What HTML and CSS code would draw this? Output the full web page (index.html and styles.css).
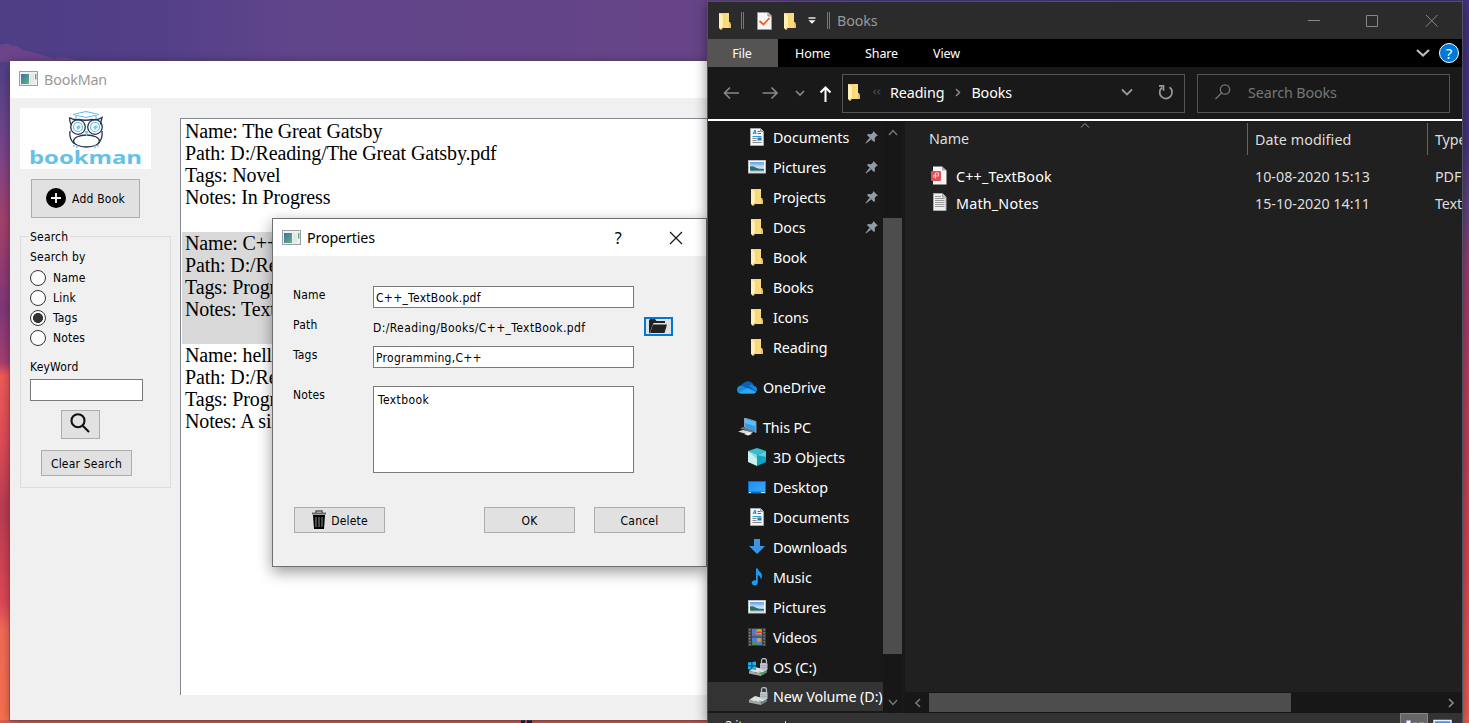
FILE: index.html
```
<!DOCTYPE html>
<html lang="en">
<head>
<meta charset="utf-8">
<title>BookMan</title>
<link rel="stylesheet" href="styles.css">
</head>
<body>
<svg class="defs" width="0" height="0">
  <defs>
    <linearGradient id="gfold" x1="0" x2="1"><stop offset="0" stop-color="#f7d271"/><stop offset="1" stop-color="#fddc83"/></linearGradient>
    <linearGradient id="gsky" x1="0" y1="0" x2="0" y2="1"><stop offset="0" stop-color="#5f9fe8"/><stop offset=".55" stop-color="#c9e6fa"/><stop offset="1" stop-color="#6fa9cf"/></linearGradient>
    <linearGradient id="gapp" x1="0" y1="0" x2="1" y2="1"><stop offset="0" stop-color="#3d6fa8"/><stop offset="1" stop-color="#62b67d"/></linearGradient>
    <linearGradient id="gdesk" x1="0" y1="0" x2="1" y2="1"><stop offset="0" stop-color="#1e90f5"/><stop offset="1" stop-color="#36a9ff"/></linearGradient>
  </defs>
  <symbol id="app" viewBox="0 0 19 15"><rect x=".5" y=".5" width="18" height="14" fill="#eef0f1" stroke="#9ba0a5"/><rect x="2" y="3" width="8" height="10" fill="url(#gapp)"/><rect x="11" y="3" width="4" height="10" fill="#e6e6e6"/><rect x="16" y="3" width="1.4" height="5.500" fill="#55ad8e"/></symbol>
  <symbol id="folder" viewBox="0 0 18 18"><path d="M3 1h10v9l2 3v3H5z" fill="url(#gfold)"/><path d="M13 10h1.200l.8 3v3h-2z" fill="#e8c16b"/><path d="M3 1l4 2.500v12L5 18l-2-2z" fill="#fff0b8"/><path d="M5 18v-1.500L7 15v1z" fill="#d9ad4a"/></symbol>
  <symbol id="doc" viewBox="0 0 18 18"><path d="M2.500.5h10l3 3v14h-13z" fill="#f5f6f7" stroke="#a5a9ac"/><path d="M12.500.5v3h3" fill="#d2d4d5" stroke="#999"/><path d="M5 6l2-4 1 4M6 5h2M9.500 3.500H12M9.500 5.500H13" stroke="#1686c8" fill="none"/><path d="M4.500 8.500h9" stroke="#2d9be0"/><path d="M4.500 10.500h4M4.500 12.500h4M4.500 14.500h9" stroke="#888"/><rect x="9.500" y="9.500" width="4" height="3" fill="#2f79a4"/></symbol>
  <symbol id="pic" viewBox="0 0 18 18"><rect x=".5" y="2.500" width="17" height="12.500" fill="#fff" stroke="#bbb"/><rect x="2" y="4" width="14" height="9.500" fill="url(#gsky)"/><path d="M2 8.500q3-1 5.500 1 4 2 8.500 1.500v1.500H2z" fill="#356d63"/></symbol>
  <symbol id="pin" viewBox="0 0 14 14"><g fill="#929ca5"><path d="M8.300 1l4.700 4.700-1.500.3-1.800 2 .3 3-1 1L2 5l1-1 3 .3 2-1.800z"/><path d="M4.500 7.800l1.700 1.700L1 13.500.5 13z"/></g></symbol>
  <symbol id="cloud" viewBox="0 0 20 18"><path d="M4 9a4 4 0 0 1 3-4 6 6 0 0 1 10 3.500A3.500 3.500 0 0 1 19 14H4a3 3 0 0 1 0-6z" fill="#0b61b5"/><path d="M12 7.500A4 4 0 0 1 17 8a3.200 3.200 0 0 1 2 5.500z" fill="#1488d8"/><path d="M0 12a4 4 0 0 1 6-3.800l4 2 9 3.800q-1 1.500-3 1.500H4a4 4 0 0 1-4-3.500z" fill="#1490df"/><path d="M2 14.800l9-4.800 8 4q-1 1.500-3 1.500H4z" fill="#2fa8ee"/></symbol>
  <symbol id="pc" viewBox="0 0 20 18"><path d="M7.500 0L19 3.500v11L7.500 9z" fill="#2b9ff0" stroke="#a0b4c4" stroke-width=".8"/><path d="M8 1l10 3v4L8 5z" fill="#64bcf7"/><path d="M6 9l12 4-3 1.500L3 10.500z" fill="#69767f"/><path d="M1 13.500L6 12l10 2.500-5 2z" fill="#d8dde4"/><path d="M7 16l5-1.500 3 1.500-4 1.500z" fill="#f0f0f0"/></symbol>
  <symbol id="cube" viewBox="0 0 18 18"><path d="M9 0l9 3-9 4-9-4z" fill="#38bdd0"/><path d="M0 3l9 4v11l-9-4z" fill="#c9f0ef"/><path d="M18 3L9 7v11l9-4z" fill="#14a1c6"/><path d="M9 7l9-4v6z" fill="#55d1df"/><path d="M0 3l9 4v4z" fill="#7edcdf"/></symbol>
  <symbol id="desk" viewBox="0 0 18 18"><rect y="3" width="18" height="12.500" fill="#0b6bbb"/><rect x="1" y="4" width="16" height="9.500" fill="url(#gdesk)"/><path d="M1 14.500h2M13 14.500h4" stroke="#cfeaff"/></symbol>
  <symbol id="down" viewBox="0 0 18 18"><path d="M6 1h6v7h5l-8 8-8-8h5z" fill="#3b95e6"/></symbol>
  <symbol id="music" viewBox="0 0 18 18"><path d="M8 .5h1.800c.3 3 3.700 3.500 4.200 7 .2 2-.7 3.300-1.500 4 .5-2.500-.8-4-2.700-4.500v7c0 5-6.800 4-6 .5.500-2 2.700-2.500 4.200-2z" fill="#1a9cf5"/></symbol>
  <symbol id="video" viewBox="0 0 18 18"><path d="M0 0h18v18H0z" fill="#3d3d3f"/><path d="M4 1h10v7.500H4zM4 9.500h10V17H4z" fill="#4b80d4"/><circle cx="11" cy="4" r="2.800" fill="#e9a62d"/><path d="M8.500 3.500h5V5h-5z" fill="#d33"/><path d="M5 5l3 3H4z" fill="#e33c34"/><circle cx="11" cy="12" r="2.200" fill="#d0a027"/><path d="M4 14l3 1 3 2H4zM10 5.500l3 2h-3z" fill="#5d8b2e"/><path d="M1.800 1v17M16.200 1v17" stroke="#888" stroke-width="1.400" stroke-dasharray="1.500 1.500"/></symbol>
  <symbol id="disk" viewBox="0 0 20 18"><path d="M1 13l6-4 12 3-6 3.500z" fill="#dedfe0"/><path d="M1 13l12 2.500V18L1 15.500z" fill="#a5a8ab"/><path d="M13 15.500l6-3.500v2.500L13 18z" fill="#777c80"/><path d="M11 14l4 .8" stroke="#35d04a"/><path d="M13.500 6V3q0-2.500 2.500-2.500T18.500 3v4" fill="none" stroke="#b7bcc0" stroke-width="1.300"/><path d="M12 5.500l4-.8 3.500 1v6l-3.500 1-4-1.500z" fill="#c1c8cd"/><path d="M12.500 7.500l3.500.5 3-.6M12.500 9.500l3.500.5 3-.6" stroke="#929a9f" fill="none" stroke-width=".7"/></symbol>
</svg>

<svg class="wallpaper" viewBox="0 0 1469 723" preserveAspectRatio="none">
  <defs>
    <linearGradient id="top" x1="0" x2="1"><stop offset="0" stop-color="#4e3e86"/><stop offset=".1" stop-color="#523f88"/><stop offset=".2" stop-color="#60458b"/><stop offset=".48" stop-color="#674487"/><stop offset=".6" stop-color="#4a3a83"/><stop offset="1" stop-color="#44337f"/></linearGradient>
    <linearGradient id="side" x1="0" y1="0" x2="0" y2="1"><stop offset="0" stop-color="#4c3f87"/><stop offset=".065" stop-color="#614389"/><stop offset=".14" stop-color="#79458b"/><stop offset=".25" stop-color="#a5426e"/><stop offset=".38" stop-color="#80387a"/><stop offset=".46" stop-color="#a64074"/><stop offset=".48" stop-color="#f05b59"/><stop offset=".58" stop-color="#df4c58"/><stop offset=".68" stop-color="#ba3d51"/><stop offset=".82" stop-color="#e04858"/><stop offset=".86" stop-color="#f26c58"/><stop offset="1" stop-color="#fa7050"/></linearGradient>
    <linearGradient id="right" x1="0" y1="0" x2="0" y2="1"><stop offset="0" stop-color="#46337f"/><stop offset=".2" stop-color="#49367d"/><stop offset=".3" stop-color="#67477f"/><stop offset=".38" stop-color="#9c3f6e"/><stop offset=".5" stop-color="#b83d60"/><stop offset=".75" stop-color="#d64752"/><stop offset="1" stop-color="#ed6354"/></linearGradient>
  </defs>
  <rect width="1469" height="62" fill="url(#top)"/>
  <rect y="55" width="12" height="668" fill="url(#side)"/>
  <path d="M0 45q7-3 12 1 6-1 10 4 12 2 20 5l12 4q12-4 24 3H0z" fill="#6b4489"/>
  <rect x="1460" width="9" height="723" fill="url(#right)"/>
  <rect y="720" width="1469" height="3" fill="#d9604f"/>
  <path d="M521 720h4v3h-4zM527 720h5v3h-5z" fill="#202040"/>
</svg>

<section class="bookman">
  <header class="bm-title"><svg class="app"><use href="#app"/></svg><span class="t-main">BookMan</span></header>
  <div class="bm-body">
    <aside class="side">
      <svg class="logo" viewBox="0 0 131 61">
        <g fill="none" stroke="#283347" stroke-width="1.300">
          <path d="M49.500 9.500q4 3 9 2 7 1.500 14 0 5 1 9.500-2-1 4-1.500 7M49.500 9.500q0 4 1.500 7M50 23Q49 31 54 35.500M82 23Q83 31 78 35.500"/>
          <circle cx="58" cy="19" r="7.300"/><circle cx="75" cy="19" r="7.300"/><ellipse cx="66.500" cy="33" rx="13" ry="6"/>
        </g>
        <g fill="none" stroke="#62bce8" stroke-width="1.200"><path d="M53 6.500l13-3 13 3-13 3zM56 8v3M76 8v3"/><circle cx="58" cy="19" r="4.500"/><circle cx="75" cy="19" r="4.500"/><path d="M54 39v-2M57 40v-3M75 40v-3M78 39v-2M66.500 25v3"/></g>
        <path d="M56 19l3-2 2 2-3 3zM73 19l3-2 2 2-3 3zM64 23h5l-2.500 4z" fill="#7acbed"/>
        <text x="9" y="55.500" textLength="113" lengthAdjust="spacingAndGlyphs" class="logo-text">bookman</text>
      </svg>
      <button class="btn add"><svg viewBox="0 0 20 20" width="20" height="20"><circle cx="10" cy="10" r="10"/><path d="M5 10h10M10 5v10" stroke="#fff" stroke-width="1.800"/></svg><span>Add Book</span></button>
      <fieldset class="group">
        <legend>Search</legend>
        <p class="by">Search by</p>
        <label class="radio"><i></i>Name</label>
        <label class="radio"><i></i>Link</label>
        <label class="radio on"><i></i>Tags</label>
        <label class="radio"><i></i>Notes</label>
        <p class="kw">KeyWord</p>
        <div class="kwbox"></div>
        <button class="btn find"><svg viewBox="0 0 20 20" width="20" height="20" fill="none" stroke="#111" stroke-width="2.100"><circle cx="8" cy="7.700" r="6.500"/><path d="M12.500 12.500L19 19"/></svg></button>
        <button class="btn clear">Clear Search</button>
      </fieldset>
    </aside>
    <main class="list">
      <article class="item"><p>Name: The Great Gatsby</p><p>Path: D:/Reading/The Great Gatsby.pdf</p><p>Tags: Novel</p><p>Notes: In Progress</p></article>
      <article class="item sel"><p>Name: C++</p><p>Path: D:/Re</p><p>Tags: Progr</p><p>Notes: Text</p></article>
      <article class="item"><p>Name: hello</p><p>Path: D:/Re</p><p>Tags: Progr</p><p>Notes: A si</p></article>
    </main>
  </div>
</section>

<section class="dialog">
  <header class="dg-title"><svg class="app"><use href="#app"/></svg><span class="t-main">Properties</span><span class="q">?</span><svg class="x" width="14" height="14" viewBox="0 0 14 14"><path d="M1 1l12 12M13 1L1 13" stroke="#111" stroke-width="1.100"/></svg></header>
  <div class="form">
    <label class="l1">Name</label><div class="field"><span class="w-name">C++_TextBook.pdf</span></div><i></i>
    <label class="l2">Path</label><div class="path">D:/Reading/Books/C++_TextBook.pdf</div>
    <button class="browse"><svg width="20" height="15" viewBox="0 0 20 15"><path d="M1 15V1.500L2 0h5l1.500 2H17v2H5.500L2 13z" fill="#222"/><path d="M5 5.500h14L16.500 14H2z" fill="#222"/></svg></button>
    <label class="l3">Tags</label><div class="field"><span>Programming,C++</span></div><i></i>
    <label class="l4">Notes</label><div class="area">Textbook</div><i></i>
  </div>
  <footer class="actions">
    <button class="btn del"><svg width="16" height="20" viewBox="0 0 16 20"><path d="M5 3V1h6v2" fill="none" stroke="#555" stroke-width="1.400"/><path d="M1 2.500h14v2H1z" fill="#666"/><path d="M2 5h12l-1 14H3z"/><path d="M5 7v10M8 7v10M11 7v10" stroke="#888" stroke-width="1.100"/></svg><span>Delete</span></button>
    <button class="btn">OK</button>
    <button class="btn cancel">Cancel</button>
  </footer>
</section>

<section class="explorer">
  <header class="ex-title">
    <svg class="f18"><use href="#folder"/></svg><b class="sep"></b>
    <svg class="check" width="15" height="18" viewBox="0 0 15 18"><path d="M.5.5h10.500l3.500 3.500v13.500H.5z" fill="#f5f6f8" stroke="#999"/><path d="M11 .5V4h3.500" fill="#ccc" stroke="#888"/><path d="M2.500 9l4 3.500L12.500 6" fill="none" stroke="#ee5a1c" stroke-width="1.700"/></svg>
    <svg class="f18 second"><use href="#folder"/></svg>
    <svg class="drop" width="8" height="7" viewBox="0 0 8 7"><path d="M.5 1h7" stroke="#fff" stroke-width="1.300"/><path d="M.5 3.200h7L4 6.700z" fill="#fff"/></svg><b class="sep"></b>
    <span class="ex-name">Books</span>
    <svg class="winbtns" width="130" height="14" viewBox="0 0 130 14" fill="none" stroke="#888"><path d="M0 6.500h12M58.500 1.500h11v11h-11zM118 1l11.500 11.500M129.500 1L118 12.500"/></svg>
  </header>
  <nav class="tabs"><span class="file">File</span><span class="home">Home</span><span class="share">Share</span><span class="view">View</span>
    <svg width="14" height="10" viewBox="0 0 14 10"><path d="M1 2l6 5.500L13 2" fill="none" stroke="#bbb" stroke-width="2.200"/></svg><em class="help">?</em></nav>
  <div class="addr">
    <svg class="arrows" width="110" height="20" viewBox="0 0 110 20" fill="none" stroke="#888" stroke-width="1.700"><path d="M16 10H1.500M7 4.500L1.500 10 7 15.500M39.500 10H54M48.500 4.500L54 10l-5.500 5.500"/><path d="M73 8l4 4 4-4"/><path d="M102.500 19V4.500M97.500 9.500l5-5 5 5" stroke="#fff" stroke-width="2"/></svg>
    <div class="crumbs"><svg class="f18"><use href="#folder"/></svg><svg class="dbl" width="9" height="6" viewBox="0 0 9 6" fill="none" stroke="#666"><path d="M4 .5L1.500 3 4 5.500M8 .5L5.500 3 8 5.500"/></svg><span class="c1">Reading</span><svg class="cr" width="6" height="9" viewBox="0 0 6 9" fill="none" stroke="#888" stroke-width="1.500"><path d="M1 1l3.500 3.500L1 8"/></svg><span>Books</span>
      <svg class="cdown" width="12" height="8" viewBox="0 0 12 8" fill="none" stroke="#999" stroke-width="1.800"><path d="M1 1.500l5 5 5-5"/></svg><svg class="refresh" width="16" height="16" viewBox="0 0 16 16" fill="none" stroke="#999" stroke-width="1.700"><path d="M4 3.500a6.200 6.200 0 1 0 7.500-.2M1 1.800h4.500v5"/></svg></div>
    <div class="search"><svg width="16" height="16" viewBox="0 0 16 16" fill="none" stroke="#777" stroke-width="1.200"><circle cx="10" cy="5.500" r="4.700"/><path d="M6.500 9L.5 15"/></svg><span>Search Books</span></div>
  </div>
  <div class="ex-body">
    <div class="tree">
      <div class="row"><svg><use href="#doc"/></svg><span>Documents</span><svg class="pin"><use href="#pin"/></svg></div>
      <div class="row"><svg><use href="#pic"/></svg><span>Pictures</span><svg class="pin"><use href="#pin"/></svg></div>
      <div class="row"><svg><use href="#folder"/></svg><span>Projects</span><svg class="pin"><use href="#pin"/></svg></div>
      <div class="row"><svg><use href="#folder"/></svg><span>Docs</span><svg class="pin"><use href="#pin"/></svg></div>
      <div class="row"><svg><use href="#folder"/></svg><span>Book</span></div>
      <div class="row"><svg><use href="#folder"/></svg><span>Books</span></div>
      <div class="row"><svg><use href="#folder"/></svg><span>Icons</span></div>
      <div class="row"><svg><use href="#folder"/></svg><span>Reading</span></div>
      <div class="row root"><svg><use href="#cloud"/></svg><span>OneDrive</span></div>
      <div class="row root"><svg><use href="#pc"/></svg><span>This PC</span></div>
      <div class="row"><svg><use href="#cube"/></svg><span>3D Objects</span></div>
      <div class="row"><svg><use href="#desk"/></svg><span>Desktop</span></div>
      <div class="row"><svg><use href="#doc"/></svg><span>Documents</span></div>
      <div class="row"><svg><use href="#down"/></svg><span>Downloads</span></div>
      <div class="row"><svg><use href="#music"/></svg><span>Music</span></div>
      <div class="row"><svg><use href="#pic"/></svg><span>Pictures</span></div>
      <div class="row"><svg><use href="#video"/></svg><span>Videos</span></div>
      <div class="row drive"><svg viewBox="0 0 20 18"><use href="#disk"/><path d="M0 4.500l3.500-.5v3.500H0zM4.300 4L8 3.500v4H4.300zM0 8.300h3.500v3.500L0 11.300zM4.300 8.300H8V12l-3.700-.4z" fill="#16b4f0"/></svg><span>OS (C:)</span></div>
      <div class="row drive cur"><svg><use href="#disk"/></svg><span>New Volume (D:)</span></div>
    </div>
    <div class="vscroll"><svg width="10" height="7" viewBox="0 0 10 7" fill="none" stroke="#777" stroke-width="1.400"><path d="M1 6l4-4.500L9 6"/></svg><i></i><svg width="10" height="7" viewBox="0 0 10 7" fill="none" stroke="#777" stroke-width="1.400"><path d="M1 1l4 4.500L9 1"/></svg></div>
    <div class="files">
      <div class="cols"><span class="cn">Name</span><span class="cd">Date modified</span><span class="ct">Type</span>
        <svg class="sort" width="10" height="6" viewBox="0 0 10 6"><path d="M1 5.500l4-4 4 4" fill="none" stroke="#999"/></svg></div>
      <div class="frow"><svg width="16" height="19" viewBox="0 0 16 19"><path d="M2 .5h9l4.500 4V18.500H2z" fill="#f6f6f6"/><path d="M11 .5l4.500 4H11z" fill="#aaa"/><rect y="5" width="10" height="10" rx="1" fill="#df5354"/><path d="M3 11.500V9h1.500v3.500M4.500 9V7h3v3H5" fill="none" stroke="#ffc9c9"/></svg><span class="cn">C++_TextBook</span><span class="cd">10-08-2020 15:13</span><span class="ct">PDF</span></div>
      <div class="frow"><svg width="16" height="19" viewBox="0 0 16 19"><path d="M2.500.5h9l3.500 3.500v13.500H2.500z" fill="#eee" stroke="#aaa"/><path d="M11.500.5V4H15" fill="#ccc" stroke="#999"/><path d="M4 3.500h6M4 5.500h9.500M4 7.500h9.500M4 9.500h9.500M4 11.500h9.500M4 13.500h9.500" stroke="#999"/></svg><span class="cn">Math_Notes</span><span class="cd">15-10-2020 14:11</span><span class="ct">Text</span></div>
      <div class="hscroll"><svg width="7" height="10" viewBox="0 0 7 10" fill="none" stroke="#777" stroke-width="1.700"><path d="M6 1L2 5l4 4"/></svg><i></i><svg width="7" height="10" viewBox="0 0 7 10" fill="none" stroke="#888" stroke-width="1.700"><path d="M1 1l4 4-4 4"/></svg></div>
    </div>
  </div>
  <footer class="status"><span class="count">2 items</span><svg width="54" height="10" viewBox="0 0 54 10"><path d="M.5 10V.5h27V10" fill="#666" stroke="#888"/><path d="M6.500 10V7.500h4V10" fill="#fff" stroke="#9ac"/><path d="M13 9.500h4M19 9.500h5" stroke="#888"/><path d="M34 10V7.500h17V10" fill="#4b8fe8" stroke="#eef" stroke-width="1.500"/></svg></footer>
</section>
</body>
</html>
```
FILE: styles.css
```
* { box-sizing: border-box; }
body { margin: 0; width: 1469px; height: 723px; overflow: hidden; position: relative; background: #50408a; font-family: "Noto Sans", sans-serif; }
p { margin: 0; }
button { font: inherit; color: inherit; padding: 0; border-radius: 0; letter-spacing: inherit; }
svg { flex: none; display: block; }
.defs { position: absolute; }
.wallpaper { position: absolute; left: 0; top: 0; width: 1469px; height: 723px; }
.app { width: 19px; height: 15px; }
.t-main { font-size: 14.3px; letter-spacing: -.15px; }

/* Library window */
.bookman { position: absolute; left: 10px; top: 61px; width: 698px; height: 659px; background: #f0f0f0; box-shadow: 0 0 0 1px rgba(90,70,90,.5), 0 2px 10px rgba(0,0,0,.4); font: 12px "DejaVu Sans Condensed", "DejaVu Sans", sans-serif; font-stretch: condensed; letter-spacing: .2px; color: #000; }
.bm-title { height: 37px; background: #fff; display: flex; align-items: center; gap: 6px; padding: 0 0 2px 9px; color: #999; }
.bm-title .t-main { padding-top: 1px; }
.bm-title .t-main, .dg-title .t-main { font-family: "Noto Sans", sans-serif; font-stretch: normal; }
.bm-body { display: flex; height: 622px; }
.side { width: 170px; padding: 10px 0 0 10px; }
.logo { width: 131px; height: 61px; background: #fff; }
.logo-text { font: bold 17px "Open Sans", sans-serif; fill: #67c0e8; letter-spacing: 0; }
.btn { display: flex; align-items: center; justify-content: center; background: #e1e1e1; border: 1px solid #adadad; padding-top: 1px; }
.add { width: 109px; height: 39px; margin: 10px 0 0 11px; gap: 6px; }
.add svg { margin-top: -3px; }
.group { position: relative; width: 151px; height: 252px; margin: 18px 0 0; padding: 0; border: 1px solid #dcdcdc; }
.group legend { position: absolute; left: 7px; top: -9px; padding: 0 2px; background: #f0f0f0; line-height: 18px; }
.by { margin: 11px 0 2px 9px; line-height: 18px; }
.radio { display: flex; align-items: center; height: 20px; margin-left: 9px; gap: 7px; }
.radio i { width: 16px; height: 16px; border: 1px solid #333; border-radius: 50%; background: #fff; }
.radio.on i { background: radial-gradient(circle, #333 0 4.700px, #fff 5.300px); }
.kw { margin: 10px 0 3px 9px; line-height: 18px; }
.kwbox { width: 113px; height: 22px; margin-left: 9px; background: #fff; border: 1px solid #7a7a7a; }
.find { width: 39px; height: 29px; margin: 9px 0 0 40px; padding: 0 1px 3px 0; }
.clear { width: 91px; height: 26px; margin: 11px 0 0 20px; }
.list { flex: 1; height: 577px; margin-top: 20px; border: 1px solid #828790; border-bottom: 0; border-right: 0; padding: 1px 0 0 1px; background: #fff; font: 20px/22px "Liberation Serif", serif; letter-spacing: -.13px; }
.item { height: 112px; padding: 0 3px; white-space: nowrap; }
.item.sel { background: #d9d9d9; }

/* Properties dialog */
.dialog { position: absolute; left: 272px; top: 218px; width: 435px; height: 349px; background: #f0f0f0; border: 1px solid #707070; box-shadow: 0 5px 14px rgba(0,0,0,.4); font: 12px "DejaVu Sans Condensed", "DejaVu Sans", sans-serif; font-stretch: condensed; letter-spacing: .2px; }
.dg-title { height: 37px; background: #fff; display: flex; align-items: center; padding: 0 23px 0 9px; }
.dg-title .t-main { margin-left: 6px; }
.q { margin-left: auto; margin-right: 47px; font: 16px "Noto Sans", sans-serif; }
.form { display: grid; grid-template-columns: 80px 261px 1fr; grid-template-rows: 22px 38px 22px 87px; padding: 30px 0 0 20px; }
.form label { line-height: 18px; }
.form > :nth-last-child(-n+3) { margin-top: 18px; }
.form > .l4 { margin-top: 18px; }
.field { height: 22px; border: 1px solid #7a7a7a; background: #fff; padding: 1px 2px 0; line-height: 20px; letter-spacing: .27px; }
.path { line-height: 40px; letter-spacing: .39px; }
.l2 { padding-top: 8px; }
.browse { width: 29px; height: 19px; margin: 9px 0 0 10px; border: 2px solid #0078d7; background: #e1e1e1; display: flex; justify-content: center; padding-right: 1px; }
.area { height: 87px; border: 1px solid #7a7a7a; background: #fff; padding: 4px; line-height: 18px; letter-spacing: .4px; }
.actions { display: flex; margin: 52px 0 0 21px; }
.actions .btn { width: 91px; height: 26px; margin-right: 19px; }
.actions .del { margin-right: 99px; gap: 4px; }
.del svg { margin-top: -2px; }

/* File explorer */
.explorer { position: absolute; left: 707px; top: 1px; width: 756px; height: 722px; border: 1px solid #525066; border-bottom: 0; background: #191919; color: #fff; box-shadow: 0 2px 12px rgba(0,0,0,.45); font-size: 14.300px; letter-spacing: -.1px; display: flex; flex-direction: column; overflow: hidden; }
.f18 { width: 18px; height: 18px; }
.ex-title { height: 37px; background: #2b2b2b; display: flex; align-items: center; padding-left: 8px; }
.sep { width: 3px; height: 17px; border: 1px solid #777; border-width: 0 1px; margin-left: 7px; }
.check { margin-left: 13px; }
.second { margin-left: 9px; }
.drop { margin-left: 9px; }
.drop + .sep { margin-left: 11px; }
.ex-name { margin-left: 7px; color: #999; }
.winbtns { margin-left: auto; margin-right: 24px; }
.tabs { height: 28px; background: #000; display: flex; align-items: center; font-size: 12.500px; padding-right: 3px; }
.file { width: 70px; height: 28px; line-height: 29px; text-align: center; padding-right: 2px; background: #565452; }
.home { margin-left: 17px; width: 70px; }
.share { width: 68px; }
.view { flex: 1; }
.help { margin-left: 9px; width: 20px; height: 20px; border: 1px solid #fff; border-radius: 50%; background: #0078d7; font: 15px/18px "Noto Sans", sans-serif; text-align: center; }
.addr { height: 54px; display: flex; align-items: center; padding-left: 15px; border-bottom: 2px solid #fff; }
.crumbs { width: 343px; height: 39px; margin-left: 9px; border: 1px solid #555; display: flex; align-items: center; padding: 0 0 2px 2px; }
.dbl { margin: 0 9px 0 9px; }
.cr { margin: 0 10px 0 11px; }
.cdown { margin-left: auto; margin-right: 25px; }
.refresh { margin-right: 10px; }
.search { width: 253px; height: 39px; margin-left: 12px; border: 1px solid #555; display: flex; align-items: center; gap: 17px; padding: 0 0 2px 17px; color: #777; }
.ex-body { display: flex; height: 591px; margin-top: 1px; }
.tree { width: 175px; }
.row { height: 30px; display: flex; align-items: center; padding-left: 41px; white-space: nowrap; overflow: hidden; }
.row svg { width: 18px; height: 18px; margin-left: -1px; margin-top: -1px; }
.row span { margin-left: 7px; }
.row svg.pin { width: 14px; height: 14px; margin-left: auto; margin-right: 4px; }
.row.root { margin-top: 10px; padding-left: 30px; }
.row.root svg { width: 20px; }
.row.root span { margin-left: 6px; }
.row.drive { padding-left: 41px; }
.row.drive svg { width: 20px; }
.row.drive span { margin-left: 5px; }
.row.cur { background: #333; height: 29px; }
.vscroll { width: 19px; display: flex; flex-direction: column; align-items: center; padding: 7px 0; background: #171717; }
.vscroll i { width: 19px; height: 436px; margin: 82px 0 auto; background: #4d4d4d; }
.files { position: relative; flex: 1; margin-left: 3px; background: #202020; display: flex; flex-direction: column; overflow: hidden; }
.cols { height: 32px; display: flex; align-items: center; color: #dedede; padding: 1px 0 0 24px; margin-bottom: 9px; }
.cols .cn { width: 318px; flex: none; }
.cols .cd { width: 180px; flex: none; height: 32px; line-height: 33px; border-left: 1px solid #636363; padding-left: 7px; letter-spacing: .08px; }
.cols .ct { flex: none; height: 32px; line-height: 33px; border-left: 1px solid #636363; padding-left: 7px; }
.sort { position: absolute; left: 175px; top: 0; }
.frow { height: 27px; display: flex; align-items: center; padding-left: 26px; color: #dedede; white-space: nowrap; }
.frow .cn { width: 299px; margin-left: 9px; color: #fff; letter-spacing: .2px; }
.frow .cd { width: 180px; letter-spacing: 0; }
.frow svg { margin-top: -2px; }
.hscroll { margin-top: auto; height: 21px; background: #171717; display: flex; align-items: center; padding: 0 7px 0 9px; }
.hscroll i { width: 362px; height: 19px; margin: 0 auto 0 8px; background: #4d4d4d; }
.status { flex: 1; background: #333; display: flex; justify-content: space-between; padding: 0 8px 0 17px; overflow: hidden; }
.count { position: relative; width: 61px; font-size: 12.500px; line-height: 17px; padding-top: 4px; }
.count::after { content: ""; position: absolute; right: 0; top: 8px; width: 1px; height: 12px; background: #ddd; }
```
